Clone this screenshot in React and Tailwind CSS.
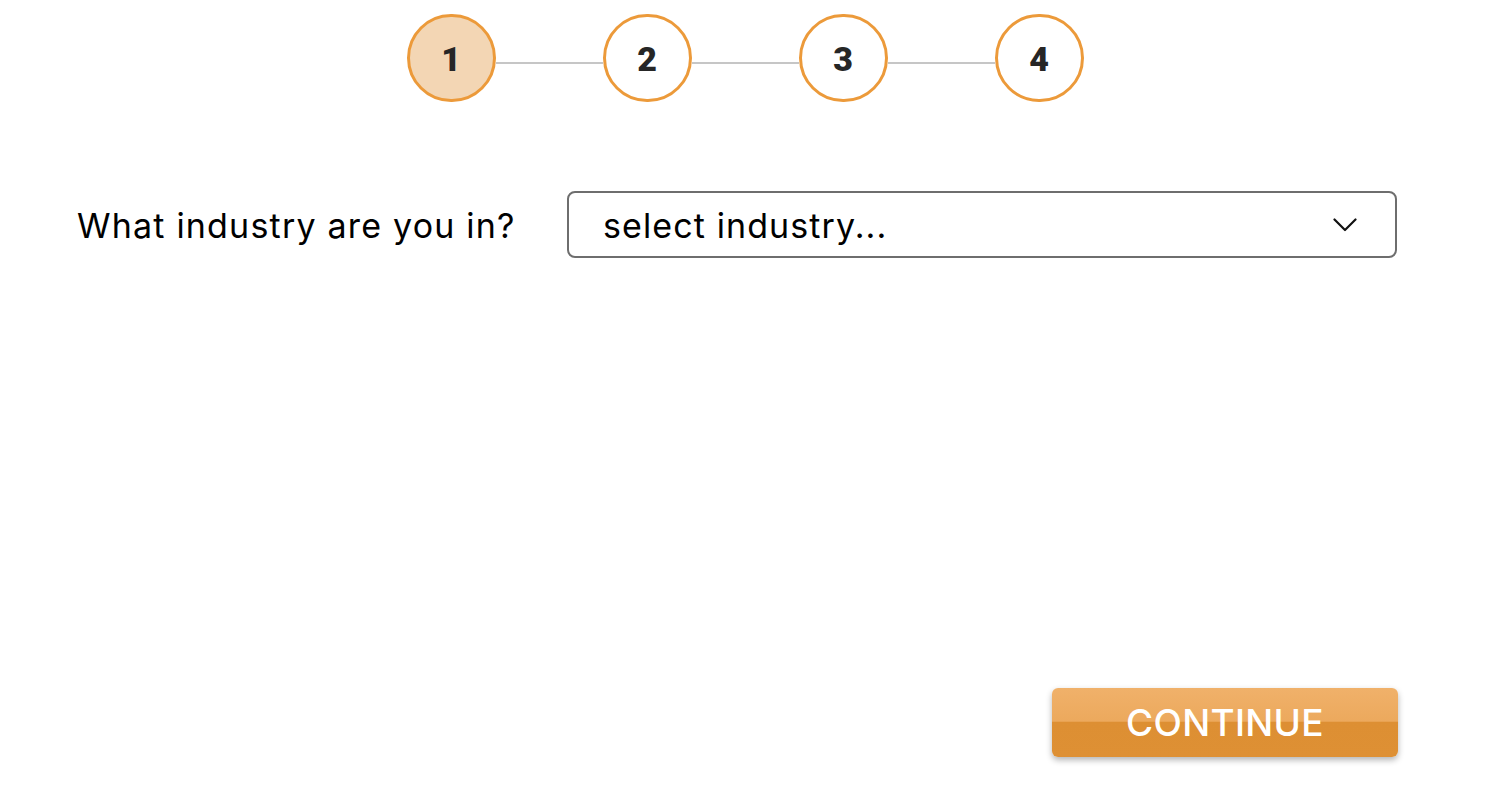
const steps = [1, 2, 3, 4];

export default function App() {
  const current = 1;

  return (
    <div className="w-[1490px] h-[812px] bg-white flex flex-col font-['Inter',sans-serif] text-black">
      <div className="flex items-center justify-center pt-[14px]">
        {steps.map((n, i) => (
          <div key={n} className="flex items-center">
            {i > 0 && <div className="w-[107px] h-[2px] mt-[9px] bg-[#c6c6c6]" />}
            <div
              className={`w-[89px] h-[88px] rounded-full border-[3px] border-[#ec9a3a] flex items-center justify-center ${n === current ? 'bg-[#f3d6b4]' : 'bg-white'}`}
            >
              <span className="font-['Roboto',sans-serif] font-black text-[34px] leading-none text-[#262626] mt-[1px]">{n}</span>
            </div>
          </div>
        ))}
      </div>

      <div className="flex items-center pl-[77px] pr-[93px] mt-[89px]">
        <label className="text-[34px] leading-none w-[490px] shrink-0 tracking-[1.2px] mt-[2px]">What industry are you in?</label>
        <div className="flex-1 h-[67px] border-2 border-[#6e6e6e] rounded-[8px] flex items-center justify-between pl-[34px] pr-[38px]">
          <span className="text-[34px] leading-none tracking-[1.1px] mt-[2px]">select industry...</span>
          <svg width="24" height="14" viewBox="0 0 24 14" fill="none" stroke="#111" strokeWidth="2.2" strokeLinecap="round" strokeLinejoin="round">
            <polyline points="1.5,1.5 12,12 22.5,1.5" />
          </svg>
        </div>
      </div>

      <div className="flex-1" />

      <div className="flex justify-end pr-[92px] pb-[55px]">
        <button className="w-[346px] h-[69px] rounded-[6px] bg-[linear-gradient(to_bottom,#f0b16a_0%,#eca95d_48%,#dd8f33_50%,#de9034_100%)] shadow-[0_3px_6px_rgba(0,0,0,0.3)] text-white text-[37px] font-medium leading-none tracking-[0.3px]">
          CONTINUE
        </button>
      </div>
    </div>
  );
}
